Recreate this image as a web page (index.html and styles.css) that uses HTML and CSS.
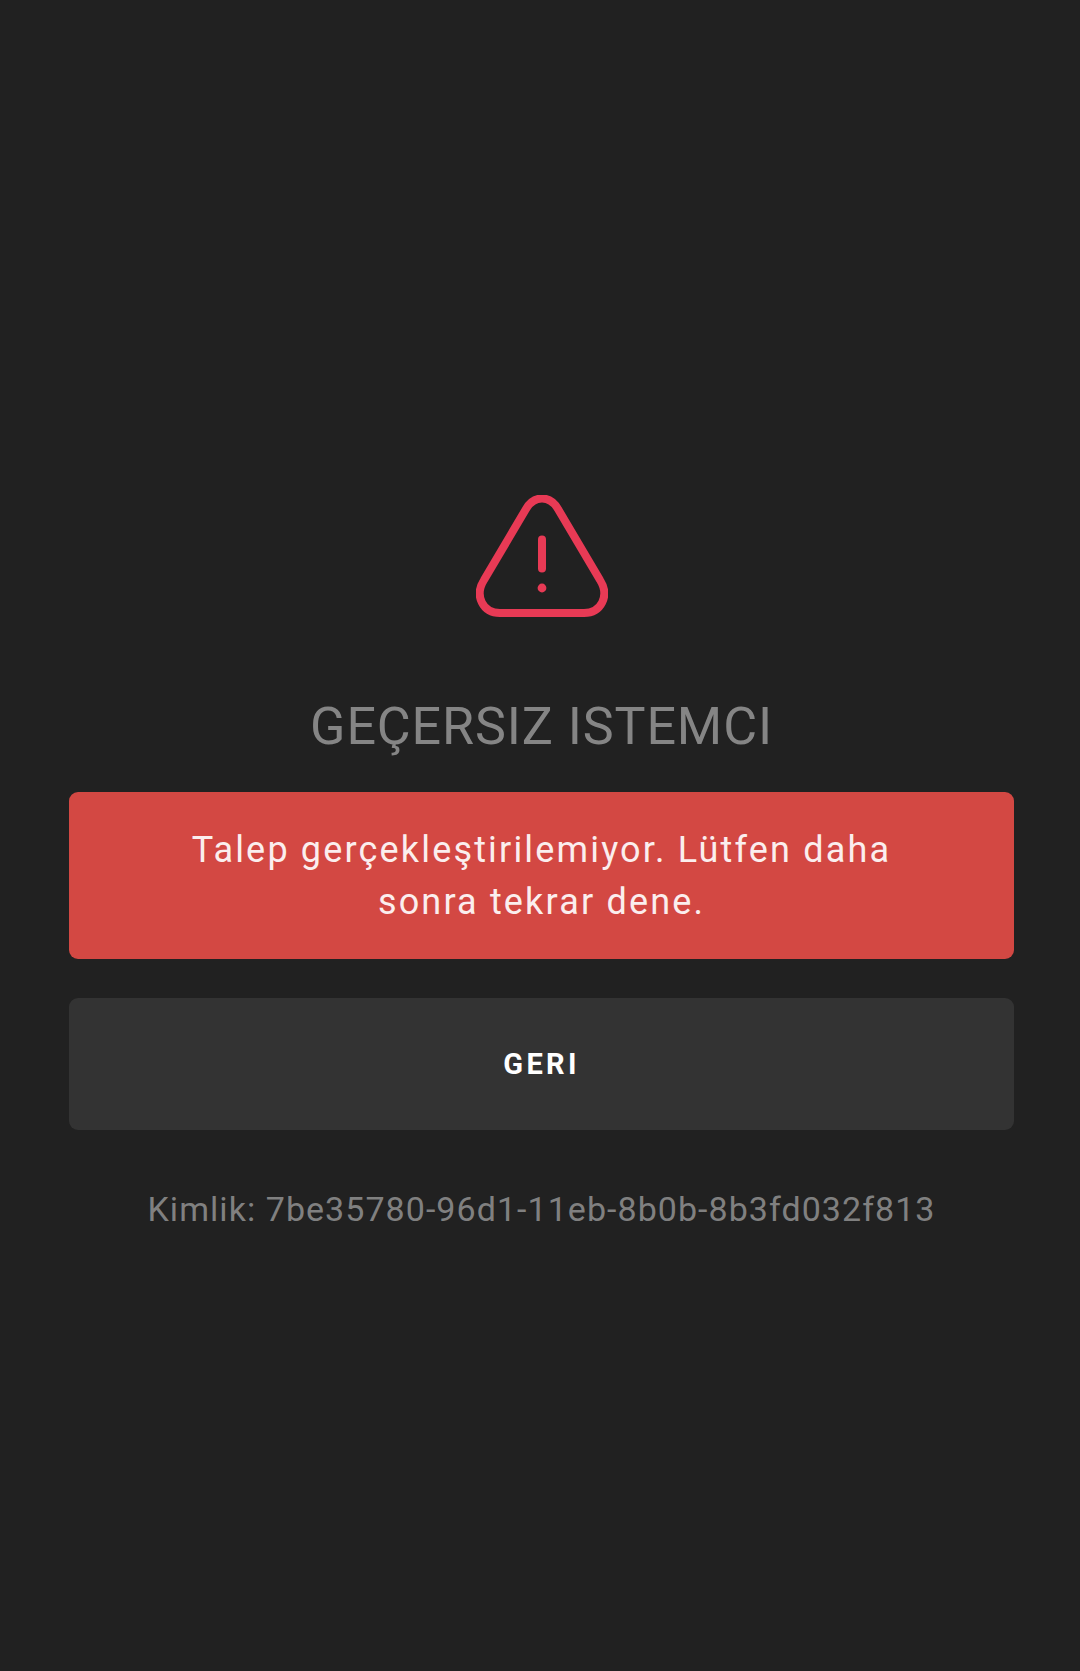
FILE: index.html
```html
<!DOCTYPE html>
<html lang="tr">
<head>
<meta charset="utf-8">
<title>Geçersiz istemci</title>
<link rel="stylesheet" href="styles.css">
</head>
<body>
<main class="page">
  <svg class="icon" width="132" height="123" viewBox="0 0 132 123" fill="none" stroke="#e83a55" stroke-width="8" stroke-linecap="round" stroke-linejoin="round" aria-hidden="true">
    <path d="M50 14C58 0 74 0 82 14L124 85C134 101 125 118 108 118H24C7 118-2 101 8 85Z"/>
    <path d="M66 44.5V73.5"/>
    <circle cx="66" cy="93" r="4.4" fill="#e83a55" stroke="none"/>
  </svg>
  <h1 class="title">GEÇERSIZ ISTEMCI</h1>
  <div class="alert">Talep gerçekleştirilemiyor. Lütfen daha<br>sonra tekrar dene.</div>
  <button class="back" type="button">GERI</button>
  <p class="id">Kimlik: 7be35780-96d1-11eb-8b0b-8b3fd032f813</p>
</main>
</body>
</html>
```
FILE: styles.css
```css
html, body {
  margin: 0;
  height: 100%;
}
body {
  background: #212121;
  font-family: Roboto, "Noto Sans", sans-serif;
}
.page {
  box-sizing: border-box;
  height: 1671px;
  padding: 495px 66px 0 69px;
  display: flex;
  flex-direction: column;
  align-items: center;
}
.icon {
  display: block;
  flex: none;
}
.title {
  margin: 79px 0 0;
  font-size: 52px;
  line-height: 60px;
  font-weight: 400;
  letter-spacing: 0.9px;
  color: #858585;
  white-space: nowrap;
}
.alert {
  box-sizing: border-box;
  width: 945px;
  height: 167px;
  margin-top: 35px;
  padding: 32px 0 0;
  background: #d34843;
  border-radius: 9px;
  color: #fbeeee;
  font-size: 36px;
  line-height: 52px;
  letter-spacing: 2.17px;
  text-align: center;
}
.back {
  display: block;
  width: 945px;
  height: 132px;
  margin-top: 39px;
  padding: 0;
  border: 0;
  background: #333333;
  border-radius: 9px;
  color: #ffffff;
  font: 700 29px Roboto, sans-serif;
  letter-spacing: 3.3px;
}
.id {
  margin: 57px 0 0;
  font-size: 34px;
  line-height: 44px;
  letter-spacing: 1.05px;
  color: #808080;
  white-space: nowrap;
}
```
